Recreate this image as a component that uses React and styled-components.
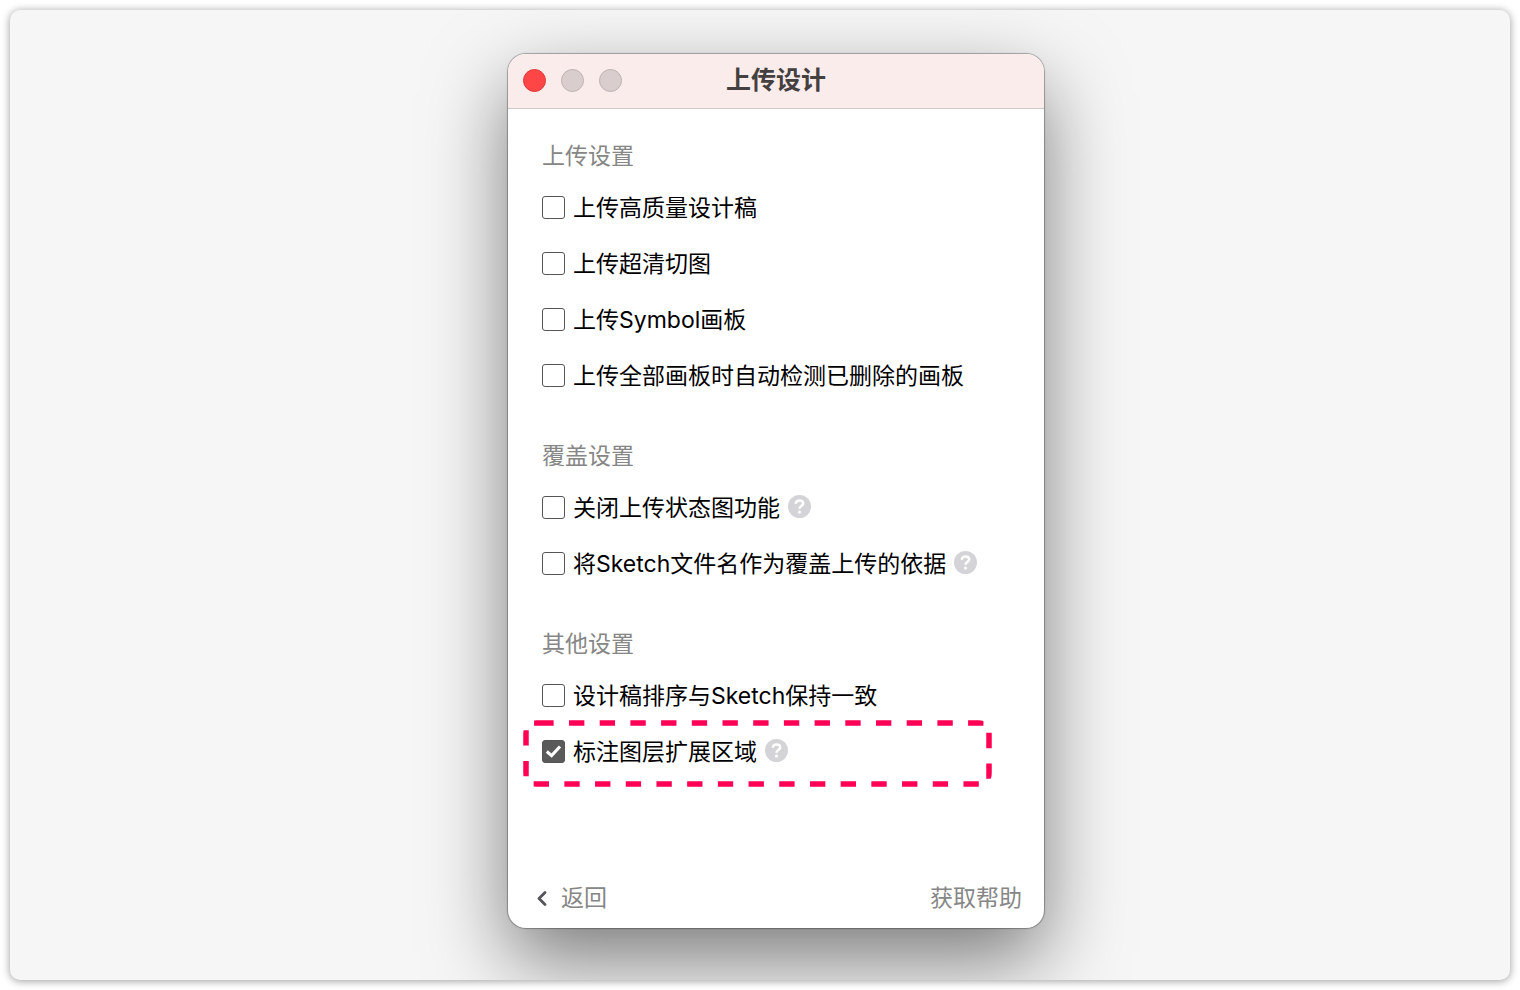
import { useState } from "react"
import styled, { createGlobalStyle } from "styled-components"

const GlobalStyle = createGlobalStyle`
    * {
        box-sizing: border-box;
    }
    body {
        margin: 0;
        background-color: #ffffff;
        font-family: Inter, "Noto Sans CJK SC", sans-serif;
    }
`
const Page = styled.div`
    min-height: 100vh;
    padding: 10px;
    display: flex;
`
const Stage = styled.main`
    flex: 1;
    display: flex;
    justify-content: center;
    padding: 44px 0 52px 32px;
    overflow: hidden;
    border-radius: 10px;
    background-color: #f6f6f6;
    box-shadow: 0 1px 8px rgba(0, 0, 0, 0.4);
`
const Window = styled.section`
    width: 100%;
    max-width: 536px;
    display: flex;
    flex-direction: column;
    border-radius: 18px;
    background-color: #ffffff;
    box-shadow: 0 0 1px 1px rgba(0, 0, 0, 0.3), 0 32px 80px rgba(0, 0, 0, 0.5);
`
const TitleBar = styled.header`
    height: 55px;
    padding: 0 15px 2px;
    display: grid;
    grid-template-columns: 1fr auto 1fr;
    align-items: center;
    border-bottom: 1px solid #cdc8c9;
    border-radius: 18px 18px 0 0;
    background-color: #fbecec;
`
const Lights = styled.div`
    display: flex;
    gap: 15px;
`
const Light = styled.button`
    width: 23px;
    height: 23px;
    padding: 0;
    border: 1px solid ${props => props.$close ? "#e0383a" : "#bfb1b2"};
    border-radius: 50%;
    background-color: ${props => props.$close ? "#ff4646" : "#dacdce"};
`
const Title = styled.h1`
    margin: 0;
    font-size: 25px;
    line-height: 32px;
    font-weight: 700;
    color: #444040;
`
const Body = styled.div`
    flex: 1;
    display: flex;
    flex-direction: column;
    gap: 56px;
    padding: 35px 34px;
`
const Group = styled.fieldset`
    margin: 0;
    padding: 0;
    border: none;
`
const GroupTitle = styled.legend`
    margin-bottom: 28px;
    padding: 0;
    font-size: 23px;
    line-height: 24px;
    color: #868686;
`
const Rows = styled.div`
    display: flex;
    flex-direction: column;
    gap: 32px;
`
const Row = styled.div`
    position: relative;
    display: flex;
    align-items: center;
    gap: 8px;
    height: 24px;
`
const Label = styled.label`
    display: flex;
    align-items: center;
    gap: 8px;
    font-size: 23px;
    line-height: 24px;
    white-space: nowrap;
    color: #000000;
`
const CheckWrap = styled.span`
    display: grid;
    width: 23px;
    height: 23px;
    margin-bottom: 1px;

    > * {
        grid-area: 1 / 1;
    }
`
const Check = styled.input`
    appearance: none;
    width: 23px;
    height: 23px;
    margin: 0;
    border: 1px solid #555555;
    border-radius: 3px;
    background-color: #ffffff;

    &:checked {
        background-color: #5a5a5a;
    }
`
const Tick = styled.svg`
    pointer-events: none;
`
const Help = styled.button`
    width: 23px;
    height: 23px;
    margin-bottom: 3px;
    padding: 0;
    border: none;
    background: none;

    svg {
        display: block;
    }
`
const Dashes = styled.svg`
    position: absolute;
    top: -20px;
    left: -19px;
    border-radius: 14px;
    pointer-events: none;
`
const Footer = styled.footer`
    display: flex;
    justify-content: space-between;
    align-items: center;
    padding: 0 22px 18px 28px;
`
const FooterLink = styled.a`
    display: flex;
    align-items: center;
    gap: 14px;
    font-size: 23px;
    line-height: 24px;
    text-decoration: none;
    color: #868686;
`

const groups = [
    {
        title: "上传设置",
        items: [
            { id: "quality", text: "上传高质量设计稿" },
            { id: "slices", text: "上传超清切图" },
            { id: "symbol", text: "上传Symbol画板" },
            { id: "deleted", text: "上传全部画板时自动检测已删除的画板" },
        ],
    },
    {
        title: "覆盖设置",
        items: [
            { id: "state", text: "关闭上传状态图功能", help: true },
            { id: "filename", text: "将Sketch文件名作为覆盖上传的依据", help: true },
        ],
    },
    {
        title: "其他设置",
        items: [
            { id: "order", text: "设计稿排序与Sketch保持一致" },
            { id: "extend", text: "标注图层扩展区域", help: true, marked: true },
        ],
    },
]

const HelpButton = () => (
    <Help type="button" aria-label="帮助">
        <svg width="23" height="23" viewBox="0 0 23 23" fill="none">
            <circle cx="11.5" cy="11.5" r="11.5" fill="#d4d4d8" />
            <path d="M7.8 8.8C7.8 6.6 9.4 5.4 11.5 5.4S15.2 6.7 15.2 8.6C15.2 10.8 11.5 10.9 11.5 13.8" stroke="#ffffff" strokeWidth="2.5" />
            <circle cx="11.5" cy="17" r="1.6" fill="#ffffff" />
        </svg>
    </Help>
)

const Marker = () => (
    <Dashes width="469" height="67" viewBox="0 0 469 67" fill="none">
        <path d="M15.3 3H466V64H3V3H15.3" stroke="#ff0055" strokeWidth="5.5" strokeDasharray="15.35 15.35" />
    </Dashes>
)

const App = () => {
    const [checked, setChecked] = useState({ extend: true })

    const toggle = (id) => {
        setChecked({ ...checked, [id]: !checked[id] })
    }

  return (
      <Page>
          <GlobalStyle />
          <Stage>
              <Window>
                  <TitleBar>
                      <Lights>
                          <Light type="button" aria-label="关闭" $close />
                          <Light type="button" aria-label="最小化" />
                          <Light type="button" aria-label="缩放" />
                      </Lights>
                      <Title>上传设计</Title>
                  </TitleBar>
                  <Body>
                      {groups.map((group) => (
                          <Group key={group.title}>
                              <GroupTitle>{group.title}</GroupTitle>
                              <Rows>
                                  {group.items.map((item) => (
                                      <Row key={item.id}>
                                          <Label htmlFor={item.id}>
                                              <CheckWrap>
                                                  <Check
                                                      type="checkbox"
                                                      id={item.id}
                                                      checked={!!checked[item.id]}
                                                      onChange={() => toggle(item.id)}
                                                  />
                                                  {checked[item.id] && (
                                                      <Tick width="23" height="23" viewBox="0 0 23 23" fill="none">
                                                          <path d="M4.8 11.5L9.6 15.6L18 6.4" stroke="#ffffff" strokeWidth="3" />
                                                      </Tick>
                                                  )}
                                              </CheckWrap>
                                              {item.text}
                                          </Label>
                                          {item.help && <HelpButton />}
                                          {item.marked && <Marker />}
                                      </Row>
                                  ))}
                              </Rows>
                          </Group>
                      ))}
                  </Body>
                  <Footer>
                      <FooterLink href="#back">
                          <svg width="11" height="16" viewBox="0 0 11 16" fill="none">
                              <path d="M9 2.5L3 8.5L9 14.5" stroke="#555559" strokeWidth="2.8" strokeLinecap="round" strokeLinejoin="round" />
                          </svg>
                          返回
                      </FooterLink>
                      <FooterLink href="#help">获取帮助</FooterLink>
                  </Footer>
              </Window>
          </Stage>
      </Page>
  )
};

export default App;
